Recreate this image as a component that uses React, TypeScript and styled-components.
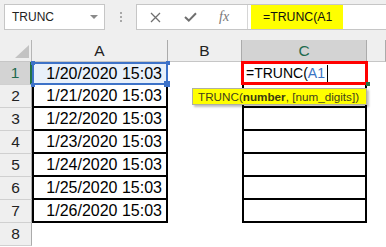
import { Fragment } from 'react';
import styled, { createGlobalStyle } from 'styled-components';

const GlobalStyle = createGlobalStyle`
  * { box-sizing: border-box; }
  html, body { margin: 0; padding: 0; background: #fff; overflow: hidden; }
  body { font-family: "Liberation Sans", Arial, sans-serif; }
`

const Page = styled.div`
  width: 386px;
  height: 247px;
  display: flex;
  flex-direction: column;
  overflow: hidden;
`

const Toolbar = styled.div`
  height: 40px;
  display: flex;
  align-items: flex-start;
  padding: 4px 0 0 4px;
  background: #efefef;
`

const NameBox = styled.div`
  width: 101px;
  height: 26px;
  display: flex;
  align-items: center;
  justify-content: space-between;
  padding: 0 6px 0 7px;
  background: #fff;
  border: 1px solid #c6c6c6;
  font-family: "Liberation Sans", Arial, sans-serif;
  font-size: 12px;
  color: #222;
`

const DropCaret = styled.span`
  width: 0;
  height: 0;
  border-left: 4px solid transparent;
  border-right: 4px solid transparent;
  border-top: 4px solid #8a8a8a;
`

const Grip = styled.div`
  width: 31px;
  height: 26px;
  display: flex;
  flex-direction: column;
  align-items: center;
  justify-content: center;
  gap: 2px;

  span {
    width: 2px;
    height: 2px;
    background: #a8a8a8;
  }
`

const FormulaBar = styled.div`
  flex: 1;
  height: 26px;
  display: flex;
  background: #fff;
  border: 1px solid #c6c6c6;
  border-right: none;
`

const Actions = styled.div`
  width: 110px;
  display: flex;
  align-items: center;
  padding-left: 13px;
  gap: 23px;
  color: #7a7a7a;
`

const Fx = styled.span`
  font-family: "Liberation Serif", "Times New Roman", serif;
  font-style: italic;
  font-size: 14px;
  color: #777;
  margin-left: -1px;
`

const Divider = styled.div`
  width: 1px;
  background: #d6d6d6;
`

const Input = styled.div`
  flex: 1;
  display: flex;
  padding-left: 3px;
`

const Highlight = styled.span`
  display: flex;
  align-items: center;
  padding: 0 11px 0 12px;
  background: #ffff00;
  font-size: 12.3px;
  color: #111;
`

const Sheet = styled.div`
  display: grid;
  grid-template-columns: 32px 136px 74px 125px 1fr;
  grid-template-rows: 22px repeat(8, 23px);
  font-family: "Liberation Sans", Arial, sans-serif;
`

const Corner = styled.div`
  position: relative;
  background: #efefef;
  border-right: 1px solid #b5b5b5;
  border-bottom: 1px solid #c6c6c6;

  &::after {
    content: '';
    position: absolute;
    right: 2px;
    bottom: 3px;
    border-left: 14px solid transparent;
    border-bottom: 13px solid #c3c3c3;
  }
`

const ColHead = styled.div<{ $on?: boolean }>`
  display: flex;
  align-items: center;
  justify-content: center;
  background: ${p => (p.$on ? '#d3d3d3' : '#efefef')};
  border-right: 1px solid #ababab;
  border-bottom: 1px solid #c6c6c6;
  font-size: 15.5px;
  color: ${p => (p.$on ? '#1f6a4f' : '#222')};
`

const RowHead = styled.div<{ $on?: boolean }>`
  display: flex;
  align-items: center;
  justify-content: center;
  background: ${p => (p.$on ? '#d3d3d3' : '#efefef')};
  border-right: ${p => (p.$on ? '2px solid #217346' : '1px solid #ababab')};
  border-bottom: 1px solid #d0d0d0;
  font-size: 15.5px;
  color: ${p => (p.$on ? '#1f6a4f' : '#222')};
`

const Cell = styled.div<{ $boxed?: boolean }>`
  display: flex;
  align-items: center;
  justify-content: flex-end;
  padding-right: 4px;
  font-size: 16px;
  color: #000;
  background: #fff;
  ${p => p.$boxed && `
    border-left: 2px solid #000;
    border-right: 2px solid #000;
    border-bottom: 2px solid #000;
  `}
`

const RefCell = styled(Cell)`
  position: relative;
  background: #e8f0fa;
  border: 2px solid #3d72c8;
`

const Handle = styled.span<{ $x: 'l' | 'r'; $y: 't' | 'b'; $big?: boolean }>`
  position: absolute;
  width: ${p => (p.$big ? 6 : 4)}px;
  height: ${p => (p.$big ? 6 : 4)}px;
  background: #3d72c8;
  ${p => (p.$x === 'l' ? 'left: -3px;' : 'right: -4px;')}
  ${p => (p.$y === 't' ? 'top: -3px;' : 'bottom: -4px;')}
`

const EditCell = styled.div`
  position: relative;
  display: flex;
  align-items: center;
  margin: -1px -1px 0 -1px;
  padding-left: 2px;
  border: 3px solid #ff0000;
  background: #fff;
  font-size: 14px;
  color: #000;
  z-index: 2;
`

const Ref = styled.span`
  color: #3a74c4;
`

const Cursor = styled.span`
  display: inline-block;
  width: 1px;
  height: 17px;
  margin-left: 2px;
  background: #000;
`

const FillMark = styled.span`
  position: absolute;
  right: -5px;
  bottom: -4px;
  width: 4px;
  height: 4px;
  background: #217346;
`

const Tip = styled.div`
  position: absolute;
  left: -52px;
  top: 24px;
  width: 175px;
  height: 17px;
  display: flex;
  align-items: center;
  padding-left: 5px;
  background: #ffff00;
  border: 1px solid #b0b0a0;
  box-shadow: 2px 2px 2px rgba(0, 0, 0, 0.25);
  font-size: 11.7px;
  color: #3f3f1c;
  white-space: nowrap;

  b { font-weight: bold; color: #3a3a10; }
`

const Empty = styled.div`
  background: #fff;
`

const dates = [
  '1/20/2020 15:03',
  '1/21/2020 15:03',
  '1/22/2020 15:03',
  '1/23/2020 15:03',
  '1/24/2020 15:03',
  '1/25/2020 15:03',
  '1/26/2020 15:03',
]

export default function App() {
  return (
    <Page>
      <GlobalStyle />
      <Toolbar>
        <NameBox>
          TRUNC
          <DropCaret />
        </NameBox>
        <Grip>
          <span />
          <span />
          <span />
        </Grip>
        <FormulaBar>
          <Actions>
            <svg width="11" height="11" viewBox="0 0 11 11">
              <path d="M1 1 L10 10 M10 1 L1 10" stroke="#6f6f6f" strokeWidth="1.3" fill="none" />
            </svg>
            <svg width="13" height="10" viewBox="0 0 13 10">
              <path d="M1 5 L4.8 8.6 L12 1.2" stroke="#6f6f6f" strokeWidth="2" fill="none" />
            </svg>
            <Fx>fx</Fx>
          </Actions>
          <Divider />
          <Input>
            <Highlight>=TRUNC(A1</Highlight>
          </Input>
        </FormulaBar>
      </Toolbar>

      <Sheet>
        <Corner />
        <ColHead>A</ColHead>
        <ColHead>B</ColHead>
        <ColHead $on>C</ColHead>
        <ColHead />

        {dates.map((d, i) => (
          <Fragment key={d}>
            <RowHead $on={i === 0}>{i + 1}</RowHead>
            {i === 0 ? (
              <RefCell>
                {d}
                <Handle $x="l" $y="t" />
                <Handle $x="r" $y="t" />
                <Handle $x="l" $y="b" />
                <Handle $x="r" $y="b" $big />
              </RefCell>
            ) : (
              <Cell $boxed>{d}</Cell>
            )}
            <Empty />
            {i === 0 ? (
              <EditCell>
                =TRUNC(<Ref>A1</Ref>
                <Cursor />
                <FillMark />
                <Tip>
                  TRUNC(<b>number</b>, [num_digits])
                </Tip>
              </EditCell>
            ) : (
              <Cell $boxed />
            )}
            <Empty />
          </Fragment>
        ))}

        <RowHead>8</RowHead>
        <Empty />
        <Empty />
        <Empty />
        <Empty />
      </Sheet>
    </Page>
  )
}
